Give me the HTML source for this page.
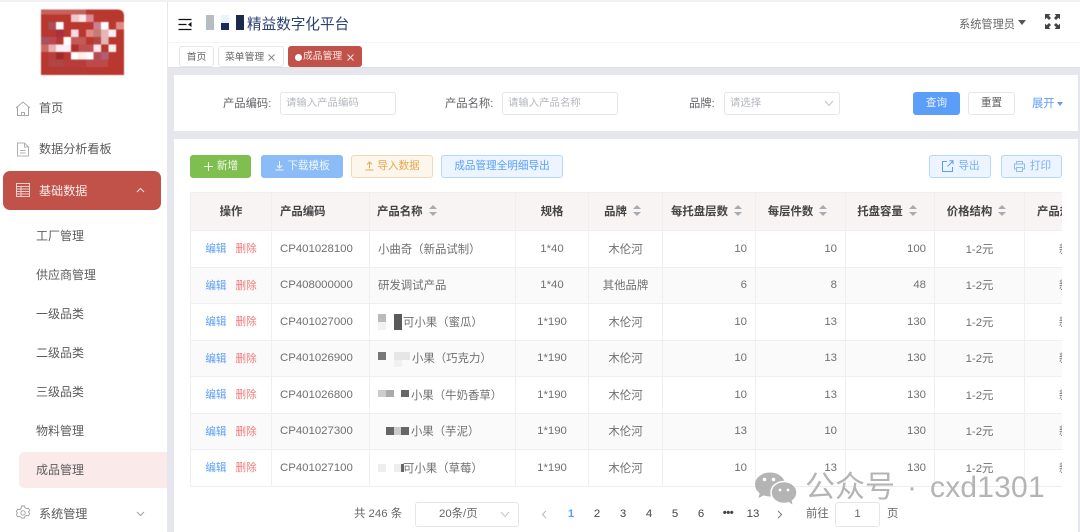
<!DOCTYPE html>
<html lang="zh"><head><meta charset="utf-8"><title>精益数字化平台</title>
<style>
*{box-sizing:border-box;margin:0;padding:0}
html,body{width:1080px;height:532px;overflow:hidden;background:#e6e7ee}
body{position:relative;font-family:"Liberation Sans","Noto Sans CJK SC",sans-serif;font-size:12px;color:#606266}
.a{position:absolute}
.t{position:absolute;white-space:nowrap;line-height:16px}
.btn{position:absolute;height:23px;border-radius:3px;font-size:10.6px;line-height:23px;text-align:center;border:1px solid;white-space:nowrap}
.inp{position:absolute;height:23px;border:1px solid #e4e6ec;border-radius:3px;background:#fff;font-size:10.4px;line-height:22px;color:#b4b7be;padding-left:5px;white-space:nowrap}
.m{font-size:12.1px;color:#5a5a5a}
.s{font-size:12px;color:#5c5c5c;left:36px}
table{position:absolute;left:0;top:0;width:872px;border-collapse:collapse;table-layout:fixed;font-size:11.4px;color:#707070}
td,th{border:1px solid #eeeff2;height:36.5px;padding:0 8px;white-space:nowrap;overflow:hidden;font-weight:400}
th{height:38.5px;background:#f8f4f4;color:#444;font-weight:700;text-align:left}
th.so{text-align:center;padding-right:14px}
tr.e td{background:#fafafa}
.c{text-align:center}.r{text-align:right}
.ed{color:#5b9ef8;font-size:10.6px}.de{color:#ee7c7c;margin-left:9px;font-size:10.6px}
.la{padding-left:34px}
.ar{display:inline-block;width:8px;height:11px;margin-left:6px;vertical-align:-1px;position:relative}
.ar:before,.ar:after{content:"";position:absolute;left:0;border-left:4px solid transparent;border-right:4px solid transparent}
.ar:before{top:0;border-bottom:4.5px solid #a8abb2}
.ar:after{bottom:0;border-top:4.5px solid #a8abb2}
.pg{position:absolute;top:506px;width:20px;text-align:center;font-size:11.4px;line-height:16px;color:#444}
.tb{position:absolute;top:46px;height:21px;border-radius:3px;font-size:9.8px;line-height:22px;white-space:nowrap}
</style></head><body>

<div class="a" style="left:0;top:0;width:1080px;height:2px;background:#f1f1f4"></div>
<!-- sidebar -->
<div class="a" style="left:0;top:2px;width:167px;height:530px;background:#fff"></div>
<svg class="a" style="left:36px;top:5px;filter:blur(.6px)" width="92" height="74" viewBox="36 5 92 74">
<path d="M41 9.500H118Q124 10 124 16V75H41Z" fill="#b8372f"/>
<g>
<rect x="41" y="9.500" width="45" height="5" fill="#c7615c"/>
<rect x="71" y="14.500" width="7.600" height="7.500" fill="#f3c8cc"/><rect x="78.600" y="14.500" width="7.600" height="7.500" fill="#fbe8ea"/><rect x="86" y="14.500" width="7.600" height="7.500" fill="#d98a90"/>
<rect x="48.500" y="22" width="7.600" height="7.500" fill="#a8505a"/><rect x="56" y="22" width="7.600" height="7.500" fill="#fff"/><rect x="93.500" y="22" width="7.600" height="7.500" fill="#cf7d90"/><rect x="101" y="22" width="7.600" height="7.500" fill="#fff"/><rect x="116" y="22" width="8" height="7.500" fill="#e08a85"/>
<rect x="56" y="29.500" width="7.600" height="7.500" fill="#a8303a"/><rect x="71" y="29.500" width="7.600" height="7.500" fill="#fbdbe8"/><rect x="86" y="29.500" width="7.600" height="7.500" fill="#e08a85"/><rect x="93.500" y="29.500" width="7.600" height="7.500" fill="#c47a75"/><rect x="101" y="29.500" width="7.600" height="7.500" fill="#e8b5b5"/><rect x="108.500" y="29.500" width="7.600" height="7.500" fill="#f8f0f5"/>
<rect x="41" y="37" width="7.600" height="7.500" fill="#a85060"/><rect x="48.500" y="37" width="7.600" height="7.500" fill="#b84a55"/><rect x="63.500" y="37" width="7.600" height="7.500" fill="#fff"/><rect x="71" y="37" width="15" height="7.500" fill="#c25a55"/><rect x="93.500" y="37" width="7.600" height="7.500" fill="#b54545"/><rect x="101" y="37" width="7.600" height="7.500" fill="#e8b5b5"/>
<rect x="41" y="44.500" width="7.600" height="7.500" fill="#c76a60"/><rect x="48.500" y="44.500" width="7.600" height="7.500" fill="#e8b0b0"/><rect x="56" y="44.500" width="15" height="7.500" fill="#fbeef5"/><rect x="71" y="44.500" width="7.600" height="7.500" fill="#b03030"/><rect x="78.600" y="44.500" width="15" height="7.500" fill="#c05050"/><rect x="93.500" y="44.500" width="7.600" height="7.500" fill="#fae8f0"/><rect x="108.500" y="44.500" width="7.600" height="7.500" fill="#f8f0f0"/>
<rect x="48.500" y="52" width="7.600" height="7.500" fill="#b8403a"/><rect x="56" y="52" width="7.600" height="7.500" fill="#a02a2a"/><rect x="71" y="52" width="7.600" height="7.500" fill="#fff"/><rect x="78.600" y="52" width="7.600" height="7.500" fill="#fdf0ea"/><rect x="86" y="52" width="7.600" height="7.500" fill="#fff"/><rect x="93.500" y="52" width="7.600" height="7.500" fill="#b54a55"/><rect x="101" y="52" width="7.600" height="7.500" fill="#b06070"/>
<rect x="48.500" y="59.500" width="15" height="7.500" fill="#b04545"/><rect x="63.500" y="59.500" width="22" height="7.500" fill="#b83c3c"/><rect x="86" y="59.500" width="22" height="7.500" fill="#bd4a4a"/>
<rect x="56" y="67" width="30" height="8" fill="#b53a34"/>
</g></svg>

<svg class="a" style="left:15px;top:100px" width="16" height="17" viewBox="0 0 16 17" fill="none" stroke="#a8a8a8" stroke-width="1"><path d="M1 8 8 2l7 6M2.500 7v8.500h11V7M6.500 15.500v-3h3v3"/></svg>
<div class="t m" style="left:39px;top:100px">首页</div>
<svg class="a" style="left:17px;top:142px" width="12" height="15" viewBox="0 0 12 15" fill="none" stroke="#b0b0b0" stroke-width="1"><path d="M.5 1h7l4 4v9H.5zM7.500 1v4h4M3 8.500h5.500M3 11h5.500"/></svg>
<div class="t m" style="left:39px;top:141px">数据分析看板</div>

<div class="a" style="left:3px;top:171px;width:158px;height:39px;background:#c1524a;border-radius:7px"></div>
<svg class="a" style="left:16px;top:183px" width="14" height="14" viewBox="0 0 14 14" fill="none" stroke="#f0d0cc" stroke-width="1"><rect x=".5" y=".5" width="13" height="13"/><path d="M.5 3.500h13M.5 6h13M.5 8.500h13M.5 11h13M5 3.500v10"/></svg>
<div class="t m" style="left:39px;top:183px;color:#fbecea">基础数据</div>
<svg class="a" style="left:136px;top:187px" width="9" height="6" viewBox="0 0 9 6" fill="none" stroke="#f6e3e1"><path d="M1 5l3.500-3.500L8 5"/></svg>

<div class="t s" style="top:228px">工厂管理</div>
<div class="t s" style="top:267px">供应商管理</div>
<div class="t s" style="top:306px">一级品类</div>
<div class="t s" style="top:345px">二级品类</div>
<div class="t s" style="top:384px">三级品类</div>
<div class="t s" style="top:423px">物料管理</div>
<div class="a" style="left:19px;top:452px;width:148px;height:36px;background:#fbeaea;border-radius:5px 0 0 5px"></div>
<div class="t s" style="top:462px">成品管理</div>
<svg class="a" style="left:16px;top:505px" width="14" height="15" viewBox="0 0 14 15" fill="none" stroke="#a0a0a0" stroke-width=".9"><path d="M5.500 1h3l.5 1.800 1.700.9 1.800-.5 1.200 2.300-1.300 1.500 1.300 1.500-1.200 2.300-1.800-.5-1.700.9-.5 1.800h-3L5 12.200l-1.700-.9-1.800.5L.3 9.500 1.600 8 .3 6.500 1.500 4.200l1.800.5L5 3.800z"/><circle cx="7" cy="7.900" r="2.200"/></svg>
<div class="t m" style="left:39px;top:506px">系统管理</div>
<svg class="a" style="left:136px;top:511px" width="9" height="6" viewBox="0 0 9 6" fill="none" stroke="#a0a0a0"><path d="M1 1l3.500 3.500L8 1"/></svg>

<!-- header -->
<div class="a" style="left:168px;top:2px;width:912px;height:66px;background:#fff"></div>
<div class="a" style="left:168px;top:42px;width:912px;height:1px;background:#f5f5f7"></div>
<div class="a" style="left:168px;top:67px;width:912px;height:1px;background:#dfe0e6"></div>
<svg class="a" style="left:178px;top:18px" width="14" height="13" viewBox="0 0 14 13"><path d="M.5 1.500h13M.5 6.500h8M.5 11.500h13" stroke="#111" stroke-width="1.200"/><path d="M13.500 4v5L10 6.500z" fill="#111"/></svg>
<div class="a" style="left:206px;top:15px;width:8px;height:15px;background:#b5bcc2"></div>
<div class="a" style="left:221px;top:15px;width:8px;height:8px;background:#e8f4fc"></div>
<div class="a" style="left:221px;top:23px;width:8px;height:7px;background:#1c2a5c"></div>
<div class="a" style="left:236px;top:15px;width:8px;height:15px;background:#1a2a4a"></div>
<div class="t" style="left:247px;top:16px;font-size:14.6px;line-height:18px;color:#2a4070">精益数字化平台</div>
<div class="t" style="left:959px;top:17px;font-size:11.2px;color:#666">系统管理员</div>
<div class="a" style="left:1018px;top:20px;border-left:4px solid transparent;border-right:4px solid transparent;border-top:5px solid #555"></div>
<svg class="a" style="left:1045px;top:14px" width="15" height="15" viewBox="0 0 15 15" fill="#444"><path d="M0 0h5.500L3.800 1.700 6 4 4 6 1.700 3.800 0 5.500zM15 0v5.500l-1.700-1.700L11 6 9 4l2.200-2.300L9.500 0zM0 15V9.500l1.700 1.700L4 9l2 2-2.200 2.300L5.500 15zM15 15H9.500l1.700-1.700L9 11l2-2 2.300 2.200L15 9.500z"/></svg>

<!-- tabs -->
<div class="tb" style="left:179px;width:35px;border:1px solid #e4e6ec;background:#fff;text-align:center;color:#666">首页</div>
<div class="tb" style="left:218px;width:66px;border:1px solid #e4e6ec;background:#fff;color:#666;padding-left:6px">菜单管理</div>
<svg class="a" style="left:268px;top:54px" width="7" height="7" viewBox="0 0 7 7" stroke="#888"><path d="M.5.500l6 6M6.500.500l-6 6"/></svg>
<div class="tb" style="left:288px;width:74px;background:#c1524a;color:#fbe9e7;padding-left:15px">成品管理</div>
<svg class="a" style="left:347px;top:54px" width="7" height="7" viewBox="0 0 7 7" stroke="#fbe9e7"><path d="M.5.500l6 6M6.500.500l-6 6"/></svg>
<div class="a" style="left:295px;top:54px;width:7px;height:7px;border-radius:50%;background:#fff"></div>

<!-- search card -->
<div class="a" style="left:174px;top:75px;width:904px;height:56px;background:#fff"></div>
<div class="t" style="left:223px;top:96px;font-size:11.3px;color:#606266">产品编码:</div>
<div class="inp" style="left:280px;top:92px;width:116px">请输入产品编码</div>
<div class="t" style="left:445px;top:96px;font-size:11.3px;color:#606266">产品名称:</div>
<div class="inp" style="left:502px;top:92px;width:116px">请输入产品名称</div>
<div class="t" style="left:689px;top:96px;font-size:11.3px;color:#606266">品牌:</div>
<div class="inp" style="left:724px;top:92px;width:116px">请选择</div>
<svg class="a" style="left:824px;top:100px" width="10" height="7" viewBox="0 0 10 7" fill="none" stroke="#c0c4cc"><path d="M1 1l4 4.500L9 1"/></svg>
<div class="btn" style="left:913px;top:92px;width:47px;background:#5b9ef8;border-color:#5b9ef8;color:#e8f2ff;line-height:21px">查询</div>
<div class="btn" style="left:968px;top:92px;width:47px;background:#fff;border-color:#e4e6ec;color:#606266;line-height:21px">重置</div>
<div class="t" style="left:1032px;top:96px;font-size:11.3px;color:#5b9ef8">展开</div>
<div class="a" style="left:1057px;top:102px;border-left:3.500px solid transparent;border-right:3.500px solid transparent;border-top:4px solid #5b9ef8"></div>

<!-- main card -->
<div class="a" style="left:174px;top:139px;width:904px;height:393px;background:#fff"></div>
<div class="btn" style="left:190px;top:155px;width:61px;background:#7fbf4f;border-color:#7fbf4f;color:#f2f9ec;padding-left:14px;line-height:21px">新增</div>
<svg class="a" style="left:204px;top:162px" width="9" height="9" viewBox="0 0 9 9" stroke="#f2f9ec"><path d="M4.500 0v9M0 4.500h9"/></svg>
<div class="btn" style="left:261px;top:155px;width:82px;background:#8bbcf8;border-color:#8bbcf8;color:#eef6ff;padding-left:13px;line-height:21px">下载模板</div>
<svg class="a" style="left:275px;top:161px" width="9" height="10" viewBox="0 0 9 10" fill="none" stroke="#eef6ff"><path d="M4.500 0v6.500M2 4.500l2.500 2.500L7 4.500M.5 9h8"/></svg>
<div class="btn" style="left:351px;top:155px;width:82px;background:#fdf6ec;border-color:#f5dab1;color:#e6a850;padding-left:13px;line-height:21px">导入数据</div>
<svg class="a" style="left:365px;top:161px" width="9" height="10" viewBox="0 0 9 10" fill="none" stroke="#e6a850"><path d="M4.500 7.500V1M2 3.500L4.500 1 7 3.500M.5 9h8"/></svg>
<div class="btn" style="left:441px;top:155px;width:122px;background:#ecf5ff;border-color:#b3d8ff;color:#5b9ef8;line-height:21px">成品管理全明细导出</div>
<div class="btn" style="left:929px;top:155px;width:62px;background:#ecf5ff;border-color:#b3d8ff;color:#79b0f6;padding-left:18px;line-height:21px">导出</div>
<svg class="a" style="left:942px;top:160px" width="12" height="12" viewBox="0 0 12 12" fill="none" stroke="#5b9ef8"><path d="M5 1.500H.5v10h10V7M5.500 6.500 11 1M7.500.7H11v3.500"/></svg>
<div class="btn" style="left:1001px;top:155px;width:61px;background:#ecf5ff;border-color:#b3d8ff;color:#79b0f6;padding-left:18px;line-height:21px">打印</div>
<svg class="a" style="left:1014px;top:161px" width="11" height="11" viewBox="0 0 11 11" fill="none" stroke="#8fbcf4"><path d="M2.500 3V.5h6V3M2.500 8H.5V3h10v5h-2M2.500 6.500h6v4h-6z"/></svg>

<!-- table -->
<div class="a" style="left:190px;top:191.500px;width:872px;height:295px;overflow:hidden">
<table>
<colgroup><col style="width:81px"><col style="width:98px"><col style="width:146px"><col style="width:73px"><col style="width:74px"><col style="width:93px"><col style="width:90px"><col style="width:89px"><col style="width:90px"><col style="width:38px"></colgroup>
<tr><th class="c">操作</th><th>产品编码</th><th style="padding-left:7px">产品名称<i class="ar"></i></th><th class="c">规格</th><th class="so">品牌<i class="ar"></i></th><th class="so">每托盘层数<i class="ar"></i></th><th class="so">每层件数<i class="ar"></i></th><th class="so">托盘容量<i class="ar"></i></th><th class="so">价格结构<i class="ar"></i></th><th style="padding-left:12px;padding-right:0">产品规格</th></tr>
<tr><td class="c"><span class="ed">编辑</span><span class="de">删除</span></td><td>CP401028100</td><td>小曲奇（新品试制）</td><td class="c">1*40</td><td class="c">木伦河</td><td class="r">10</td><td class="r">10</td><td class="r">100</td><td class="c">1-2元</td><td class="la">新品</td></tr>
<tr class="e"><td class="c"><span class="ed">编辑</span><span class="de">删除</span></td><td>CP408000000</td><td>研发调试产品</td><td class="c">1*40</td><td class="c">其他品牌</td><td class="r">6</td><td class="r">8</td><td class="r">48</td><td class="c">1-2元</td><td class="la">新品</td></tr>
<tr><td class="c"><span class="ed">编辑</span><span class="de">删除</span></td><td>CP401027000</td><td style="padding-left:33px">可小果（蜜瓜）</td><td class="c">1*190</td><td class="c">木伦河</td><td class="r">10</td><td class="r">13</td><td class="r">130</td><td class="c">1-2元</td><td class="la">新品</td></tr>
<tr class="e"><td class="c"><span class="ed">编辑</span><span class="de">删除</span></td><td>CP401026900</td><td style="padding-left:42px">小果（巧克力）</td><td class="c">1*190</td><td class="c">木伦河</td><td class="r">10</td><td class="r">13</td><td class="r">130</td><td class="c">1-2元</td><td class="la">新品</td></tr>
<tr><td class="c"><span class="ed">编辑</span><span class="de">删除</span></td><td>CP401026800</td><td style="padding-left:41px">小果（牛奶香草）</td><td class="c">1*190</td><td class="c">木伦河</td><td class="r">10</td><td class="r">13</td><td class="r">130</td><td class="c">1-2元</td><td class="la">新品</td></tr>
<tr class="e"><td class="c"><span class="ed">编辑</span><span class="de">删除</span></td><td>CP401027300</td><td style="padding-left:41px">小果（芋泥）</td><td class="c">1*190</td><td class="c">木伦河</td><td class="r">13</td><td class="r">10</td><td class="r">130</td><td class="c">1-2元</td><td class="la">新品</td></tr>
<tr><td class="c"><span class="ed">编辑</span><span class="de">删除</span></td><td>CP401027100</td><td style="padding-left:33px">可小果（草莓）</td><td class="c">1*190</td><td class="c">木伦河</td><td class="r">10</td><td class="r">13</td><td class="r">130</td><td class="c">1-2元</td><td class="la">新品</td></tr>
</table>
</div>
<!-- mosaics -->
<div class="a" style="left:378px;top:314px;width:8px;height:8px;background:#bbb"></div><div class="a" style="left:378px;top:322px;width:8px;height:8px;background:#f2f2f2"></div><div class="a" style="left:394px;top:314px;width:8px;height:16px;background:#5a5a5a"></div>
<div class="a" style="left:378px;top:352px;width:8px;height:8px;background:#777"></div><div class="a" style="left:394px;top:352px;width:16px;height:8px;background:#e6e6e6"></div><div class="a" style="left:394px;top:360px;width:8px;height:7px;background:#f1f1f1"></div>
<div class="a" style="left:378px;top:390px;width:8px;height:7px;background:#ccc"></div><div class="a" style="left:386px;top:390px;width:8px;height:7px;background:#aaa"></div><div class="a" style="left:401px;top:390px;width:8px;height:7px;background:#666"></div>
<div class="a" style="left:386px;top:427px;width:8px;height:8px;background:#666"></div><div class="a" style="left:394px;top:427px;width:7px;height:8px;background:#ccc"></div><div class="a" style="left:401px;top:427px;width:8px;height:8px;background:#666"></div>
<div class="a" style="left:378px;top:464px;width:8px;height:8px;background:#eee"></div><div class="a" style="left:394px;top:464px;width:7px;height:8px;background:#eee"></div><div class="a" style="left:401px;top:464px;width:3px;height:8px;background:#666"></div>

<!-- pagination -->
<div class="t" style="left:354px;top:506px;font-size:11.4px;color:#666">共 246 条</div>
<div class="a" style="left:415px;top:502px;width:104px;height:25px;border:1px solid #e4e6ec;border-radius:3px;font-size:11.4px;line-height:23px;color:#666;padding-left:23px">20条/页</div>
<svg class="a" style="left:500px;top:511px" width="10" height="7" viewBox="0 0 10 7" fill="none" stroke="#c0c4cc"><path d="M1 1l4 4.500L9 1"/></svg>
<svg class="a" style="left:541px;top:510px" width="7" height="9" viewBox="0 0 7 9" fill="none" stroke="#b4b7be"><path d="M5 .8 1.500 4.500 5 8.200"/></svg>
<div class="pg" style="left:561px;color:#5b9ef8;font-weight:700">1</div>
<div class="pg" style="left:587px">2</div><div class="pg" style="left:613px">3</div><div class="pg" style="left:639px">4</div><div class="pg" style="left:665px">5</div><div class="pg" style="left:691px">6</div>
<div class="pg" style="left:718px;font-weight:700;letter-spacing:-.5px;top:505px">•••</div>
<div class="pg" style="left:743px">13</div>
<svg class="a" style="left:776px;top:510px" width="7" height="9" viewBox="0 0 7 9" fill="none" stroke="#777"><path d="M2 .8 5.500 4.500 2 8.200"/></svg>
<div class="t" style="left:806px;top:506px;font-size:11.4px;color:#666">前往</div>
<div class="a" style="left:835px;top:502px;width:45px;height:25px;border:1px solid #e4e6ec;border-radius:3px;background:#fff;text-align:center;font-size:11.4px;line-height:23px;color:#666">1</div>
<div class="t" style="left:887px;top:506px;font-size:11.4px;color:#666">页</div>

<!-- watermark -->
<svg class="a" style="left:750px;top:468px" width="50" height="40" viewBox="750 468 50 40">
<ellipse cx="770" cy="484.500" rx="15" ry="12" fill="#b4b4b4"/>
<path d="M760 492l-1.500 6 7-3.500z" fill="#b4b4b4"/>
<ellipse cx="784" cy="492.500" rx="13" ry="11" fill="#b4b4b4" stroke="#fff" stroke-width="1.500"/>
<path d="M788 501.500l4.500 3-1-5z" fill="#b4b4b4"/>
<circle cx="764.500" cy="479.500" r="1.800" fill="#fff"/><circle cx="773.500" cy="479.500" r="1.800" fill="#fff"/><circle cx="780" cy="490" r="1.400" fill="#fff"/><circle cx="788" cy="490" r="1.400" fill="#fff"/>
</svg>
<div class="t" style="left:805px;top:470px;font-size:30px;line-height:36px;color:#b4b4b4">公众号</div>
<div class="t" style="left:907px;top:470px;font-size:30px;line-height:36px;color:#b4b4b4">·</div>
<div class="t" style="left:930px;top:470px;font-size:30px;line-height:36px;color:#b4b4b4;letter-spacing:.2px">cxd1301</div>
</body></html>
